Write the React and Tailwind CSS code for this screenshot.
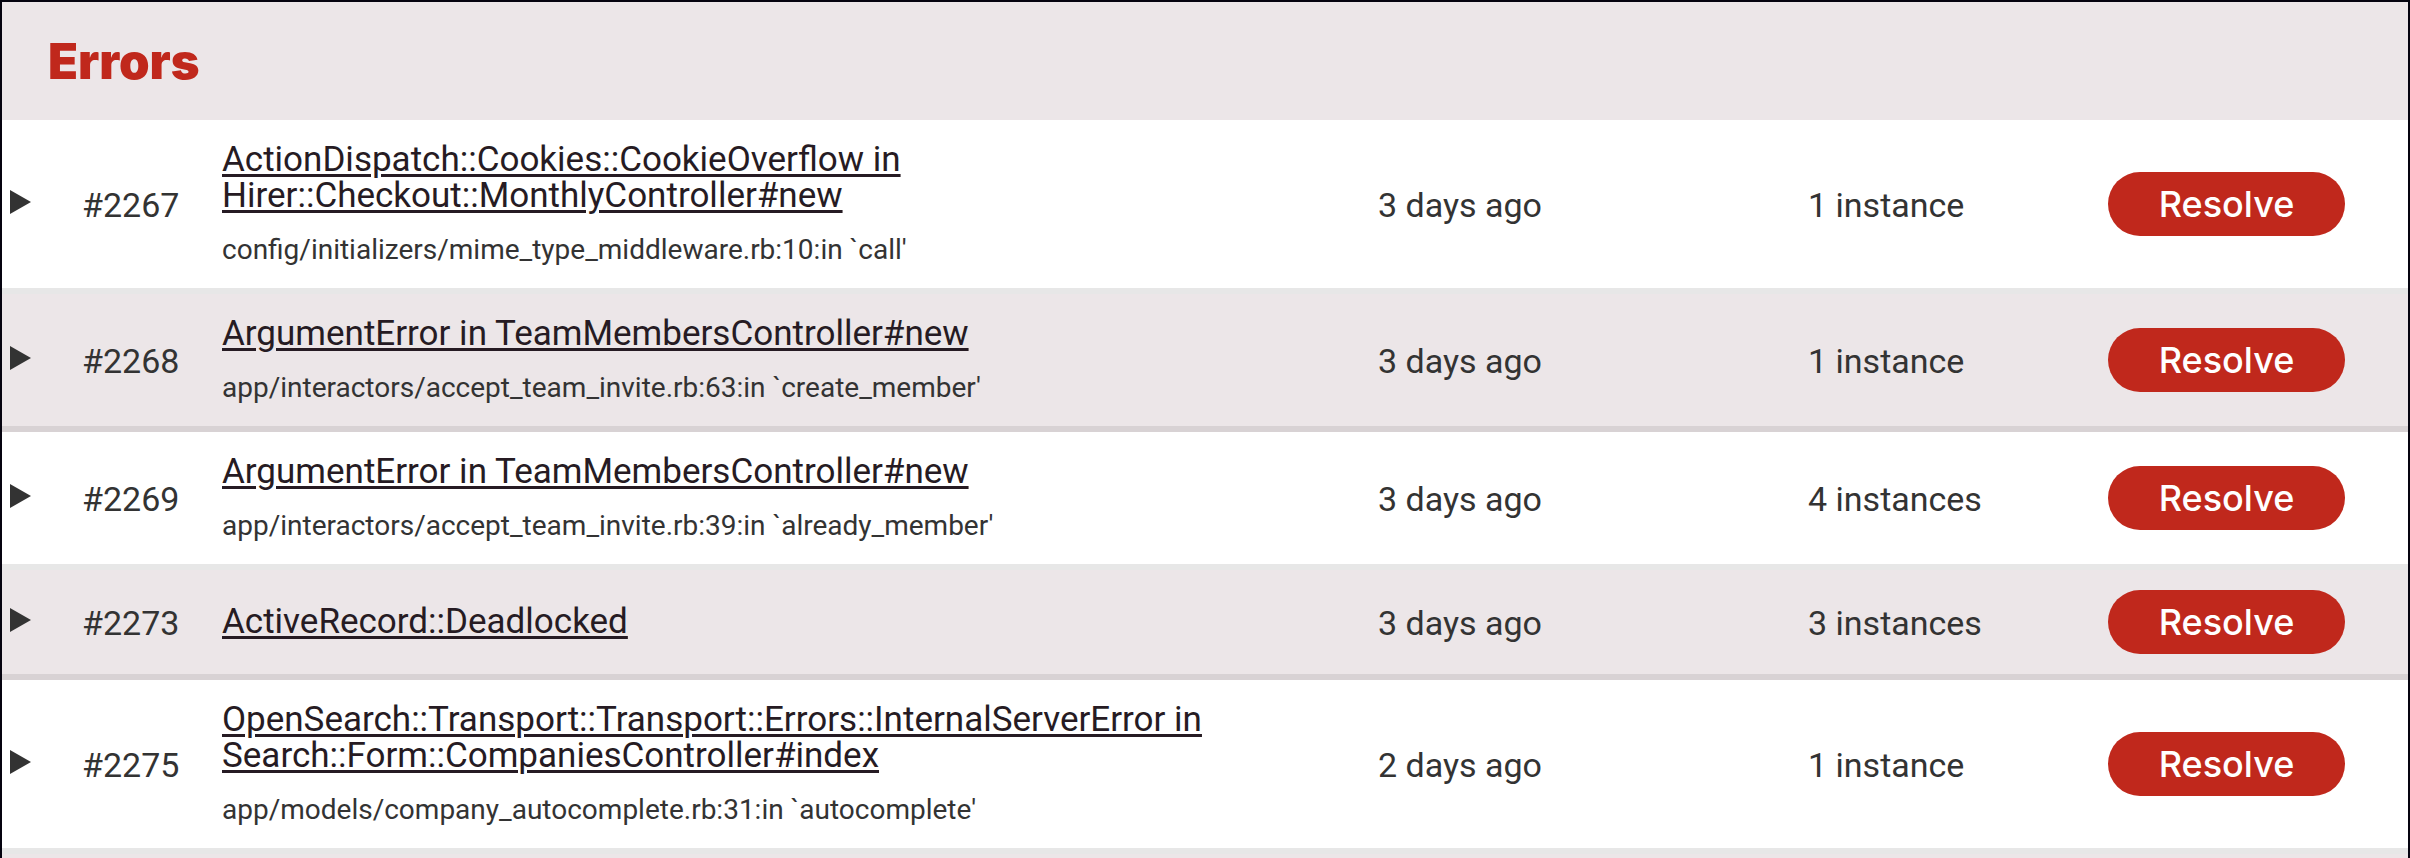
import React from "react";

const errors = [
  {
    id: 2267,
    title: "ActionDispatch::Cookies::CookieOverflow in Hirer::Checkout::MonthlyController#new",
    source: "config/initializers/mime_type_middleware.rb:10:in `call'",
    when: "3 days ago",
    count: 1,
  },
  {
    id: 2268,
    title: "ArgumentError in TeamMembersController#new",
    source: "app/interactors/accept_team_invite.rb:63:in `create_member'",
    when: "3 days ago",
    count: 1,
  },
  {
    id: 2269,
    title: "ArgumentError in TeamMembersController#new",
    source: "app/interactors/accept_team_invite.rb:39:in `already_member'",
    when: "3 days ago",
    count: 4,
  },
  { id: 2273, title: "ActiveRecord::Deadlocked", when: "3 days ago", count: 3 },
  {
    id: 2275,
    title: "OpenSearch::Transport::Transport::Errors::InternalServerError in Search::Form::CompaniesController#index",
    source: "app/models/company_autocomplete.rb:31:in `autocomplete'",
    when: "2 days ago",
    count: 1,
  },
];

function ErrorRow({ error }) {
  return (
    <tr className="border-b-6 border-[#e7e7e7] bg-white even:border-[#d8d2d4] even:bg-[#ece6e8]">
      <td className="pt-5 pb-6 pl-2">
        <button type="button" aria-label={`Expand error ${error.id}`} className="block">
          <svg viewBox="0 0 21 24" className="h-6 w-[21px] fill-[#333333]" aria-hidden="true">
            <path d="M0 0 21 12 0 24Z" />
          </svg>
        </button>
      </td>
      <td className="pt-[22px] pb-5">#{error.id}</td>
      <td className="py-[22px]">
        <a
          href={`#error-${error.id}`}
          className="block text-[35px]/[36px] text-[#261b23] underline decoration-3 underline-offset-3"
        >
          {error.title}
        </a>
        {error.source && <p className="mt-5 text-[28px]/[32px]">{error.source}</p>}
      </td>
      <td className="pt-[22px] pb-5">{error.when}</td>
      <td className="pt-[22px] pb-5">
        {error.count} {error.count === 1 ? "instance" : "instances"}
      </td>
      <td className="py-5">
        <button
          type="button"
          className="block h-16 w-[237px] rounded-full bg-[#c0281c] text-center font-[Inter,sans-serif] text-[36px]/[62px] font-medium text-white"
        >
          Resolve
        </button>
      </td>
    </tr>
  );
}

export default function App() {
  return (
    <main className="min-h-screen border-x-2 border-t-2 border-[#05030f] bg-[#ece6e8] font-[Roboto,sans-serif] text-[#333333]">
      <h1 className="px-[46px] pt-8 pb-[30px] font-[Inter,sans-serif] text-[49px]/[56px] font-black text-[#c0281c]">
        Errors
      </h1>
      <table className="w-full table-fixed border-collapse text-left text-[34px]/[36px]">
        <colgroup>
          <col className="w-[80px]" />
          <col className="w-[140px]" />
          <col />
          <col className="w-[430px]" />
          <col className="w-[300px]" />
          <col className="w-[300px]" />
        </colgroup>
        <tbody>
          {errors.map((error) => (
            <ErrorRow key={error.id} error={error} />
          ))}
        </tbody>
      </table>
    </main>
  );
}
